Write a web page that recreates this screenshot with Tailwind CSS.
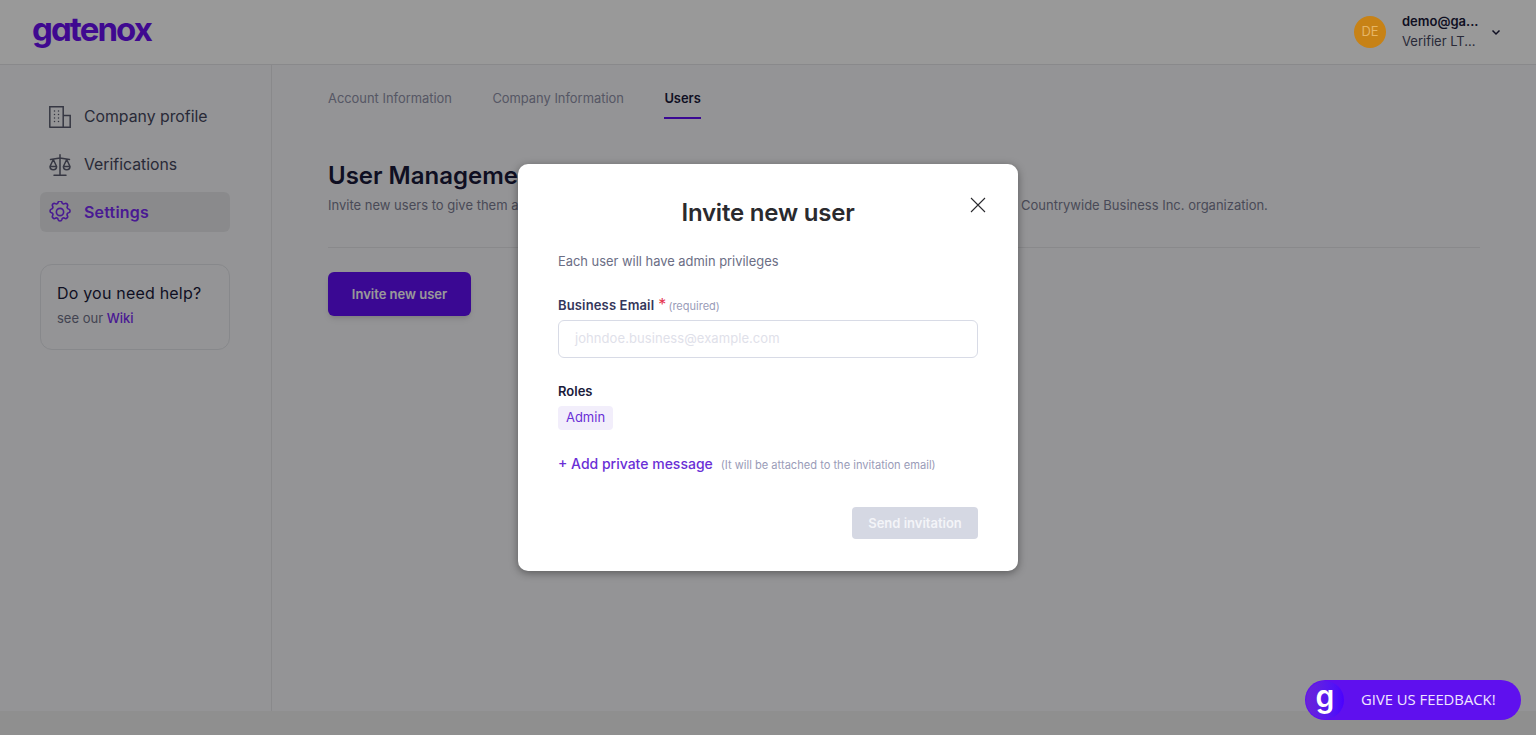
<!DOCTYPE html>
<html lang="en">
<head>
    <meta charset="UTF-8">
    <meta name="viewport" content="width=device-width, initial-scale=1.0">
    <title>Gatenox - Users</title>
    <script src="https://cdn.jsdelivr.net/npm/@tailwindcss/browser@4"></script>
</head>
<body class="relative h-[735px] overflow-hidden bg-[#eeeeee] font-['Inter','Liberation_Sans',sans-serif] text-[#1a1a3a]">
    <div class="h-[711px] bg-[#f7f7fa]">
        <!-- header -->
        <header class="flex h-[65px] items-center justify-between border-b border-[#e4e4e8] bg-white pl-[32px] pr-[34px]">
            <span class="-mt-[6px] font-['Inter',sans-serif] text-[33px] font-bold leading-none tracking-[-1.9px] text-[#6a10f0] [font-feature-settings:'cv11']">gatenox</span>
            <div class="flex items-center">
                <div class="relative z-10 flex h-8 w-8 items-center justify-center rounded-full bg-[#c78216] text-[13px] text-[#e6b566]">DE</div>
                <div class="-mt-[2px] ml-[16px] w-[76px] text-[13px] leading-[20px]">
                    <div class="font-semibold text-[#1a1a3a]">demo@ga...</div>
                    <div class="text-[#45475e]">Verifier LT...</div>
                </div>
                <svg class="ml-[12px] h-3 w-3 text-[#1a1a3a]" viewBox="0 0 12 12" fill="none" stroke="currentColor" stroke-width="1.5"><path d="M2.5 4.5 6 8l3.5-3.5"/></svg>
            </div>
        </header>

        <div class="flex h-[646px]">
            <!-- sidebar -->
            <aside class="w-[272px] shrink-0 border-r border-[#e4e4e8] pl-[40px] pr-[41px] pt-[31px]">
                <nav class="flex flex-col gap-[8px]">
                    <a class="flex h-[40px] items-center gap-[13px] rounded-md px-[9px] pt-[1px] text-[15.800px] text-[#45475e]">
                        <svg class="h-[22px] w-[22px] text-[#5a5d70]" viewBox="0 0 22 22" fill="none" stroke="currentColor" stroke-width="1.500" stroke-linecap="round"><path d="M.8 21.200V.8h13.400v20.400M.8 21.200h20.400V9.500h-7M5.500 5v.01M9.500 5v.01M5.500 8.500v.01M9.500 8.500v.01M5.500 12v.01M9.500 12v.01M5.500 15.500v.01M9.500 15.500v.01"/></svg>
                        Company profile
                    </a>
                    <a class="flex h-[40px] items-center gap-[13px] rounded-md px-[9px] pt-[1px] text-[15.800px] text-[#45475e]">
                        <svg class="h-[22px] w-[22px] text-[#5a5d70]" viewBox="0 0 22 22" fill="none" stroke="currentColor" stroke-width="1.500" stroke-linejoin="round" stroke-linecap="round"><path d="M11 .8v19.500M5 21.200h12M1.500 5.500 11 4l9.500 1.500M4.300 5.500 1 12.500c0 4.300 6.600 4.300 6.600 0L4.300 5.500ZM17.700 5.500 14.400 12.500c0 4.300 6.600 4.300 6.600 0l-3.300-7ZM1 12.500h6.600M14.400 12.500H21"/></svg>
                        Verifications
                    </a>
                    <a class="flex h-[40px] items-center gap-[13px] rounded-md bg-[#e6e7ea] px-[9px] text-[16px] font-semibold tracking-[0.2px] text-[#7a2cf5]">
                        <svg class="h-[22px] w-[22px]" viewBox="2 2 20 20" fill="none" stroke="currentColor" stroke-width="1.500" stroke-linecap="round" stroke-linejoin="round"><path d="M10.300 3.300c.4-1.800 3-1.800 3.400 0a1.700 1.700 0 0 0 2.600 1.100c1.500-.9 3.300.8 2.400 2.400a1.700 1.700 0 0 0 1.100 2.500c1.800.4 1.800 3 0 3.400a1.700 1.700 0 0 0-1.100 2.600c.9 1.500-.9 3.300-2.400 2.400a1.700 1.700 0 0 0-2.600 1.100c-.4 1.800-3 1.800-3.400 0a1.700 1.700 0 0 0-2.600-1.100c-1.500.9-3.300-.9-2.400-2.400a1.700 1.700 0 0 0-1-2.600c-1.800-.4-1.800-3 0-3.400a1.700 1.700 0 0 0 1-2.500c-.9-1.600.9-3.300 2.400-2.400a1.700 1.700 0 0 0 2.600-1.100Z"/><circle cx="12" cy="12" r="3.300"/></svg>
                        Settings
                    </a>
                </nav>
                <div class="mt-[32px] h-[86px] rounded-xl border border-[#e2e3e8] pl-[16px] pt-[16px]">
                    <div class="text-[16px] font-normal leading-[24px] tracking-[0.2px] text-[#1a1a3a]">Do you need help?</div>
                    <div class="mt-[3px] text-[13px] leading-[20px] text-[#6f7188]">see our <span class="font-medium text-[#7a2cf5]">Wiki</span></div>
                </div>
            </aside>

            <!-- main -->
            <main class="flex-1 pl-[56px] pr-[56px] pt-[24px]">
                <div class="flex gap-[40.500px] text-[12.900px]">
                    <span class="pb-[8px] leading-[20px] text-[#8f91a8]">Account Information</span>
                    <span class="pb-[8px] leading-[20px] text-[#8f91a8]">Company Information</span>
                    <span class="border-b-2 border-[#620ef5] pb-[8px] font-semibold leading-[20px] text-[#1a1a3a]">Users</span>
                </div>
                <h1 class="mt-[41px] text-[24px] font-semibold leading-[32px] text-[#1a1a3a]">User Management</h1>
                <p class="mt-[3px] text-[13px] leading-[20px] text-[#7a7c92]">Invite new users to give them access to the verification tools and reports, and allow them to manage users in the Countrywide Business Inc. organization.</p>
                <div class="mt-[32px] border-t border-[#e4e4e8]"></div>
                <button class="mt-[24px] h-[44px] w-[143px] rounded-md bg-[#620ef5] pt-[1px] text-[13px] font-semibold text-white shadow-md">Invite new user</button>
            </main>
        </div>
    </div>

    <!-- modal overlay -->
    <div class="absolute inset-0 bg-black/40"></div>
    <div class="absolute left-[518px] top-[164px] h-[407px] w-[500px] rounded-[10px] bg-white px-[40px] pt-[33px] shadow-[0_2px_8px_rgba(0,0,0,0.4)]">
        <h2 class="text-center text-[24px] font-semibold leading-[32px] tracking-[-0.2px] text-[#2a2a2e]">Invite new user</h2>
        <button class="absolute right-[30px] top-[31px] text-[#2a2a2e]">
            <svg class="h-5 w-5" viewBox="0 0 20 20" fill="none" stroke="currentColor" stroke-width="1.100"><path d="M3 3l14 14M17 3 3 17"/></svg>
        </button>
        <p class="mt-[23px] text-[12.900px] leading-[20px] text-[#6b6e85]">Each user will have admin privileges</p>
        <div class="mt-[22px] flex items-baseline text-[13px] font-semibold leading-[20px] tracking-[0.15px] text-[#34365a]">
            Business Email <span class="ml-[4px] text-[16px] font-normal text-[#e5344f]">*</span>
            <span class="ml-[2px] text-[11px] font-normal tracking-normal text-[#9a9cb8]">(required)</span>
        </div>
        <div class="mt-[4px] flex h-[38px] items-center rounded-md border border-[#d8dbe6] pl-[16px] text-[13px] tracking-[0.07px] text-[#dfe1ea]">johndoe.business@example.com</div>
        <div class="mt-[23px] text-[13px] font-semibold leading-[20px] text-[#1a1a3a]">Roles</div>
        <div class="mt-[5px] flex h-[24px] w-[55px] items-center justify-center rounded bg-[#f2eefb] text-[13px] text-[#6a2fd6]">Admin</div>
        <div class="mt-[23px] flex items-baseline">
            <span class="text-[14px] font-medium leading-[22px] text-[#6a2fd6]">+ Add private message</span>
            <span class="ml-[8px] text-[11.100px] text-[#9a9cb8]">(It will be attached to the invitation email)</span>
        </div>
        <div class="mt-[32px] flex justify-end">
            <div class="flex h-[32px] w-[126px] items-center justify-center rounded bg-[#d5d8e3] pt-[1px] text-[13px] font-semibold text-[#f3f4f8]">Send invitation</div>
        </div>
    </div>

    <!-- feedback button -->
    <div class="absolute left-[1305px] top-[680px] flex h-[40px] w-[216px] items-center rounded-full bg-[#5f10ee] font-['Open_Sans','Liberation_Sans',sans-serif]">
        <div class="ml-[1px] flex h-[38px] w-[38px] items-center justify-center rounded-full bg-gradient-to-r from-[#6a22d8] to-[#4a00ff] text-[30px] font-semibold leading-none text-white"><span class="-mt-[9px] font-['Inter',sans-serif]">g</span></div>
        <span class="-mt-[1px] ml-[17px] text-[14.800px] text-[#f0e6ff]">GIVE US FEEDBACK!</span>
    </div>
</body>
</html>
